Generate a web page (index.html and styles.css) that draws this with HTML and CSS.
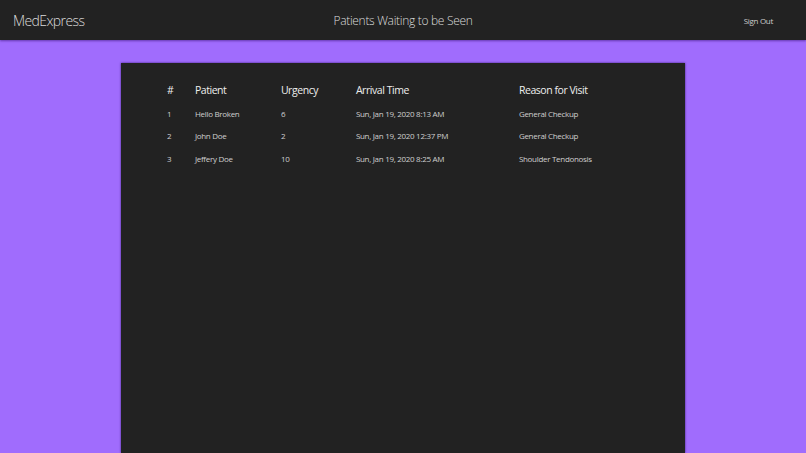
FILE: index.html
```html
<!DOCTYPE html>
<html>
<head>
<meta charset="utf-8">
<link rel="stylesheet" href="styles.css">
</head>
<body>
<header class="topbar">
  <div class="brand">MedExpress</div>
  <div class="title">Patients Waiting to be Seen</div>
  <div class="signout">Sign Out</div>
</header>
<main class="content">
  <section class="card">
    <div class="table">
      <div class="row head">
        <div>#</div><div>Patient</div><div>Urgency</div><div>Arrival Time</div><div>Reason for Visit</div>
      </div>
      <div class="row">
        <div>1</div><div>Hello Broken</div><div>6</div><div>Sun, Jan 19, 2020 8:13 AM</div><div>General Checkup</div>
      </div>
      <div class="row">
        <div>2</div><div>John Doe</div><div>2</div><div>Sun, Jan 19, 2020 12:37 PM</div><div>General Checkup</div>
      </div>
      <div class="row">
        <div>3</div><div>Jeffery Doe</div><div>10</div><div>Sun, Jan 19, 2020 8:25 AM</div><div>Shoulder Tendonosis</div>
      </div>
    </div>
  </section>
</main>
</body>
</html>
```
FILE: styles.css
```css
* { box-sizing: border-box; }
html, body {
  margin: 0;
  height: 100%;
}
body {
  background: #a06cfd;
  font-family: "Open Sans", "Liberation Sans", sans-serif;
  overflow: hidden;
}
.topbar {
  height: 40px;
  background: #222222;
  display: grid;
  grid-template-columns: 1fr auto 1fr;
  align-items: center;
  padding: 0 13px;
  box-shadow: 0 1px 2px rgba(60, 20, 120, 0.6);
  position: relative;
}
.brand {
  font-size: 14px;
  font-weight: 300;
  letter-spacing: -0.6px;
  color: #dcdcdc;
}
.title {
  font-size: 12px;
  font-weight: 300;
  letter-spacing: -0.3px;
  color: #dcdcdc;
}
.signout {
  justify-self: end;
  margin-right: 20px;
  font-size: 8px;
  letter-spacing: -0.3px;
  color: #cccccc;
}
.content {
  padding-top: 23px;
  display: flex;
  justify-content: center;
}
.card {
  width: 70%;
  height: calc(100vh - 63px);
  background: #222222;
  box-shadow: 0 0 2px rgba(40, 10, 90, 0.8);
  padding: 19px 0 0 46px;
}
.row {
  display: grid;
  grid-template-columns: 28px 86px 75px 163px 150px;
  height: 22.5px;
  align-items: center;
  font-size: 8px;
  letter-spacing: -0.3px;
  color: #cfcfcf;
}
.row.head {
  font-size: 10.5px;
  letter-spacing: -0.45px;
  color: #eeeeee;
  height: 16px;
  margin-bottom: 4px;
}
```
